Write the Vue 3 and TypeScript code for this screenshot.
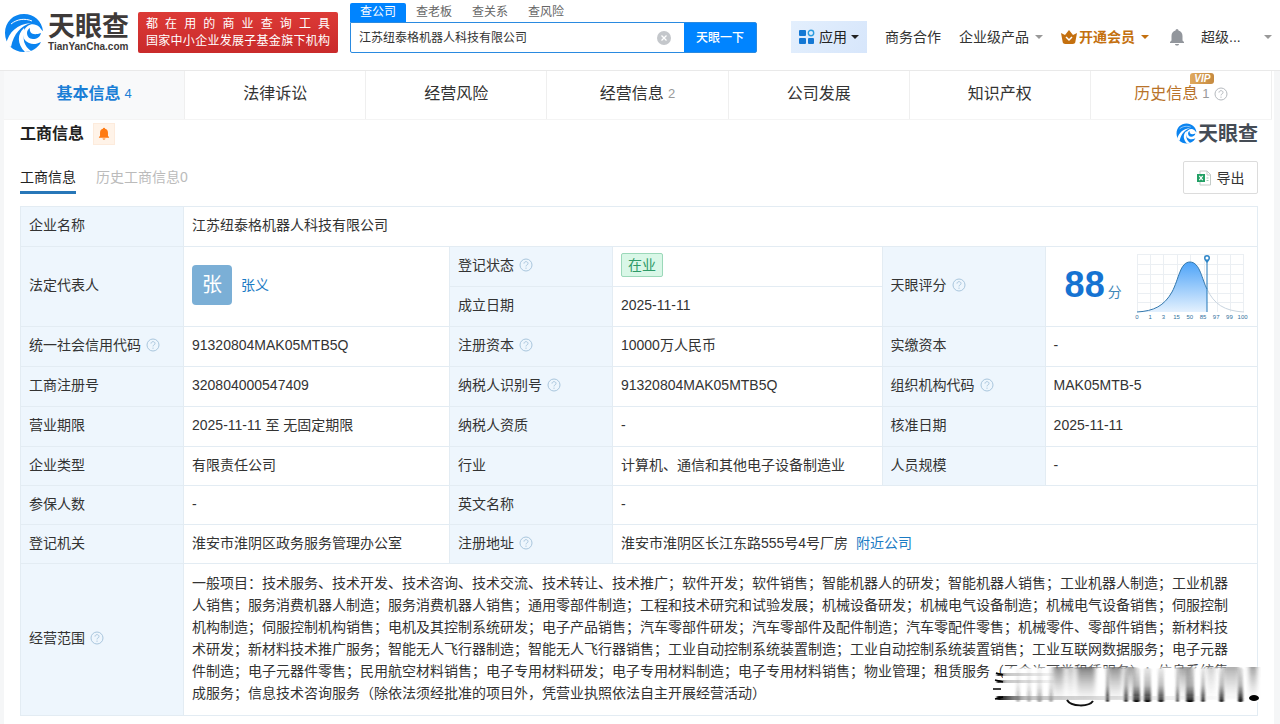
<script setup lang="ts">
import { ref } from 'vue'

interface NavItem {
  label: string
  count?: number
  vip?: boolean
}

const searchTabs: string[] = ['查公司', '查老板', '查关系', '查风险']
const activeSearch = ref(0)
const keyword = ref('江苏纽泰格机器人科技有限公司')

const navItems: NavItem[] = [
  { label: '基本信息', count: 4 },
  { label: '法律诉讼' },
  { label: '经营风险' },
  { label: '经营信息', count: 2 },
  { label: '公司发展' },
  { label: '知识产权' },
  { label: '历史信息', count: 1, vip: true },
]
const activeNav = ref(0)

const scoreTicks: string[] = ['0', '1', '3', '15', '50', '85', '97', '99', '100']

const scope =
  '一般项目：技术服务、技术开发、技术咨询、技术交流、技术转让、技术推广；软件开发；软件销售；智能机器人的研发；智能机器人销售；工业机器人制造；工业机器人销售；服务消费机器人制造；服务消费机器人销售；通用零部件制造；工程和技术研究和试验发展；机械设备研发；机械电气设备制造；机械电气设备销售；伺服控制机构制造；伺服控制机构销售；电机及其控制系统研发；电子产品销售；汽车零部件研发；汽车零部件及配件制造；汽车零配件零售；机械零件、零部件销售；新材料技术研发；新材料技术推广服务；智能无人飞行器制造；智能无人飞行器销售；工业自动控制系统装置制造；工业自动控制系统装置销售；工业互联网数据服务；电子元器件制造；电子元器件零售；民用航空材料销售；电子专用材料研发；电子专用材料制造；电子专用材料销售；物业管理；租赁服务（不含许可类租赁服务）；信息系统集成服务；信息技术咨询服务（除依法须经批准的项目外，凭营业执照依法自主开展经营活动）'

interface Streak {
  x: number
  w: number
  o: number
}
const streaks: Streak[] = [
  { x: 25, w: 4, o: 0.3 },
  { x: 36, w: 4, o: 0.3 },
  { x: 46, w: 5, o: 0.35 },
  { x: 58, w: 4, o: 0.35 },
  { x: 115, w: 3, o: 1 },
  { x: 133, w: 4, o: 0.9 },
  { x: 142, w: 7, o: 1 },
  { x: 153, w: 7, o: 1 },
  { x: 167, w: 6, o: 0.9 },
  { x: 185, w: 3, o: 0.8 },
  { x: 195, w: 8, o: 1 },
  { x: 210, w: 4, o: 0.9 },
  { x: 228, w: 5, o: 0.9 },
  { x: 247, w: 5, o: 1 },
]
const smudges: Streak[] = [
  { x: 62, w: 11, o: 0.7 },
  { x: 76, w: 7, o: 0.4 },
  { x: 86, w: 18, o: 0.8 },
  { x: 117, w: 14, o: 0.7 },
  { x: 135, w: 9, o: 0.6 },
  { x: 187, w: 14, o: 0.6 },
  { x: 216, w: 8, o: 0.3 },
  { x: 232, w: 16, o: 0.5 },
  { x: 258, w: 8, o: 0.6 },
]
</script>

<template>
  <svg class="defs" width="0" height="0" aria-hidden="true">
    <symbol id="swirl" viewBox="0 0 40 40">
      <path d="M20 1C9 1 1 9 1 20s8 19 19 19c8 0 14-4 17-10-4 2-8 3-12 1-5-2-7-7-5-12 2-6 8-8 12-6 4 1 5 5 7 6C38 8 30 1 20 1z" fill="#0b84f0" />
      <path d="M37 20c-1 4-4 6-8 6-4 0-6-3-6-6 0-2 1-4 3-5-1 5 3 8 11 5z" fill="#0b84f0" />
      <path d="M2 31C5 19 13 11 27 10 17 13 10 20 7 34z" fill="#fff" />
      <path d="M20 15c-7 6-7 16 1 24l6-1c-7-5-9-12-6-20z" fill="#fff" />
      <path d="M7 11c6-5 14-6 21-3" fill="none" stroke="#fff" stroke-width="1" />
    </symbol>
    <symbol id="help" viewBox="0 0 14 14">
      <circle cx="7" cy="7" r="6" fill="none" stroke="currentColor" />
      <path d="M5 5.600C5 3 9 3 9 5.500 9 7 7 6.800 7 8.400M7 9.600v1.200" fill="none" stroke="currentColor" />
    </symbol>
    <symbol id="bell" viewBox="0 0 16 18">
      <path d="M8 1a1.500 1.500 0 0 1 1.500 1.500C12 3.200 13.500 5 13.500 8v4.500L15 14v1H1v-1l1.500-1.500V8c0-3 1.500-4.800 4-5.500A1.500 1.500 0 0 1 8 1zM6 16h4c0 2-4 2-4 0z" fill="currentColor" />
    </symbol>
  </svg>

  <header class="top">
    <a class="brand" href="#" aria-label="天眼查">
      <svg class="brand-mark"><use href="#swirl" /></svg>
      <span class="brand-text">
        <span class="brand-name">天眼查</span>
        <span class="brand-domain">TianYanCha.com</span>
      </span>
    </a>
    <div class="slogan">
      <span>都在用的商业查询工具</span>
      <span>国家中小企业发展子基金旗下机构</span>
    </div>
    <form class="search" @submit.prevent>
      <div class="search-tabs">
        <button
          v-for="(tab, i) in searchTabs"
          :key="tab"
          type="button"
          :class="{ active: i === activeSearch }"
          @click="activeSearch = i"
        >{{ tab }}</button>
      </div>
      <div class="search-row">
        <input v-model="keyword" type="text" aria-label="搜索" />
        <button class="clear" type="button" aria-label="清空" @click="keyword = ''">
          <svg viewBox="0 0 14 14" width="14" height="14">
            <circle cx="7" cy="7" r="7" fill="#c4c7cb" />
            <path d="M4.500 4.500l5 5M9.500 4.500l-5 5" stroke="#fff" stroke-width="1.300" />
          </svg>
        </button>
        <button class="submit" type="submit">天眼一下</button>
      </div>
    </form>
    <nav class="tools">
      <button class="apps" type="button">
        <svg viewBox="0 0 16 16" width="16" height="16">
          <rect x="0" y="1" width="7" height="6" rx="1" fill="#1478d4" />
          <circle cx="12" cy="4" r="2.700" fill="none" stroke="#2b9de0" stroke-width="1.400" />
          <rect x="0" y="9" width="7" height="6" rx="1" fill="#1478d4" />
          <rect x="9" y="9" width="6" height="6" rx="1" fill="#1478d4" />
        </svg>
        <span>应用</span><i class="caret"></i>
      </button>
      <a class="coop" href="#">商务合作</a>
      <button class="plain" type="button"><span>企业级产品</span><i class="caret light"></i></button>
      <button class="plain member" type="button">
        <svg viewBox="0 0 16 14" width="16" height="14">
          <path d="M0 3l4 2 4-5 4 5 4-2-1.500 8c0 2-1 3-3 3h-7c-2 0-3-1-3-3z" fill="#c4700f" />
          <path d="M5 7l3 3 3-3" fill="none" stroke="#fff" stroke-width="1.500" />
        </svg>
        <span>开通会员</span><i class="caret"></i>
      </button>
      <button class="notice" type="button" aria-label="消息">
        <svg width="16" height="18"><use href="#bell" /></svg>
      </button>
      <button class="plain user" type="button"><span>超级...</span><i class="caret light"></i></button>
    </nav>
  </header>

  <main class="page">
    <nav class="main-nav">
      <a
        v-for="(item, i) in navItems"
        :key="item.label"
        href="#"
        :class="{ active: i === activeNav, vip: item.vip }"
        @click.prevent="activeNav = i"
      >
        <span class="nav-label">{{ item.label }}<b v-if="item.vip" class="vip-badge">VIP</b></span>
        <span v-if="item.count" class="count">{{ item.count }}</span>
        <svg v-if="item.vip" class="help grey"><use href="#help" /></svg>
      </a>
    </nav>

    <section class="content">
      <div class="title-row">
        <h2>工商信息</h2>
        <button class="alert" type="button" aria-label="监控">
          <svg width="12" height="13"><use href="#bell" /></svg>
        </button>
        <div class="stamp">
          <svg width="21" height="21"><use href="#swirl" /></svg><span>天眼查</span>
        </div>
      </div>

      <div class="sub-row">
        <div class="sub-tabs">
          <button class="active" type="button">工商信息</button>
          <button type="button">历史工商信息0</button>
        </div>
        <button class="export" type="button">
          <svg viewBox="0 0 14 16" width="14" height="16">
            <path d="M3 1h7l3.500 3.500V15H3z" fill="#fff" stroke="#c3cbc8" />
            <path d="M10 1v4h3.500" fill="none" stroke="#c3cbc8" />
            <path d="M9.500 8h2M9.500 10.500h2" stroke="#9bcbb2" />
            <rect x="0" y="4" width="8" height="8" fill="#22a065" />
            <path d="M2.300 5.800l3.400 4.400M5.700 5.800l-3.400 4.400" stroke="#fff" stroke-width="1.200" />
          </svg>
          <span>导出</span>
        </button>
      </div>

      <div class="table-wrap">
        <table>
          <colgroup>
            <col class="c-label" /><col class="c-first" />
            <col class="c-label" /><col class="c-second" />
            <col class="c-label" /><col />
          </colgroup>
          <tbody>
            <tr>
              <th scope="row">企业名称</th>
              <td colspan="5">江苏纽泰格机器人科技有限公司</td>
            </tr>
            <tr>
              <th scope="row" rowspan="2">法定代表人</th>
              <td rowspan="2">
                <div class="person"><span class="avatar">张</span><a href="#">张义</a></div>
              </td>
              <th scope="row">登记状态<svg class="help"><use href="#help" /></svg></th>
              <td><span class="status">在业</span></td>
              <th scope="row" rowspan="2">天眼评分<svg class="help"><use href="#help" /></svg></th>
              <td class="score-cell" rowspan="2">
                <div class="score">
                  <strong>88</strong><span class="unit">分</span>
                  <svg class="chart" viewBox="0 0 116 70" width="116" height="70">
                    <defs>
                      <linearGradient id="area" x1="0" y1="0" x2="0" y2="1">
                        <stop offset="0" stop-color="#4da3f8" />
                        <stop offset="1" stop-color="#e4f1fe" />
                      </linearGradient>
                    </defs>
                    <path d="M5 4.500h107M5 14.500h107M5 24.500h107M5 33.500h107M5 43.500h107M5 52.500h107M5.500 4v58M18.500 4v58M31.500 4v58M45.500 4v58M58.500 4v58M72.500 4v58M85.500 4v58M98.500 4v58M111.500 4v58" stroke="#ebeff3" />
                    <path d="M5 62C22 61 32 56 40 42C47 29 48 12 58 12C68 12 70 30 75 39V62z" fill="url(#area)" />
                    <path d="M75 39C82 54 92 61 112 62" fill="none" stroke="#c8d4df" />
                    <path d="M5 62C22 61 32 56 40 42C47 29 48 12 58 12C68 12 70 30 75 39" fill="none" stroke="#3478ad" />
                    <path d="M75 10v52" stroke="#2176b8" />
                    <path d="M72 8a3 3 0 1 1 6 0c0 2-3 5-3 5s-3-3-3-5z" fill="#2e86c8" />
                    <circle cx="75" cy="8" r="1.500" fill="#fff" />
                    <text v-for="(t, i) in scoreTicks" :key="t" :x="5 + i * 13.200" y="69" class="tick">{{ t }}</text>
                  </svg>
                </div>
              </td>
            </tr>
            <tr>
              <th scope="row">成立日期</th>
              <td>2025-11-11</td>
            </tr>
            <tr>
              <th scope="row">统一社会信用代码<svg class="help"><use href="#help" /></svg></th>
              <td>91320804MAK05MTB5Q</td>
              <th scope="row">注册资本<svg class="help"><use href="#help" /></svg></th>
              <td>10000万人民币</td>
              <th scope="row">实缴资本</th>
              <td>-</td>
            </tr>
            <tr>
              <th scope="row">工商注册号</th>
              <td>320804000547409</td>
              <th scope="row">纳税人识别号<svg class="help"><use href="#help" /></svg></th>
              <td>91320804MAK05MTB5Q</td>
              <th scope="row">组织机构代码<svg class="help"><use href="#help" /></svg></th>
              <td>MAK05MTB-5</td>
            </tr>
            <tr>
              <th scope="row">营业期限</th>
              <td>2025-11-11 至 无固定期限</td>
              <th scope="row">纳税人资质</th>
              <td>-</td>
              <th scope="row">核准日期</th>
              <td>2025-11-11</td>
            </tr>
          </tbody>
          <tbody class="tight">
            <tr>
              <th scope="row">企业类型</th>
              <td>有限责任公司</td>
              <th scope="row">行业</th>
              <td>计算机、通信和其他电子设备制造业</td>
              <th scope="row">人员规模</th>
              <td>-</td>
            </tr>
            <tr>
              <th scope="row">参保人数</th>
              <td>-</td>
              <th scope="row">英文名称</th>
              <td colspan="3">-</td>
            </tr>
            <tr>
              <th scope="row">登记机关</th>
              <td>淮安市淮阴区政务服务管理办公室</td>
              <th scope="row">注册地址<svg class="help"><use href="#help" /></svg></th>
              <td colspan="3">淮安市淮阴区长江东路555号4号厂房<a class="nearby" href="#">附近公司</a></td>
            </tr>
            <tr>
              <th scope="row">经营范围<svg class="help"><use href="#help" /></svg></th>
              <td class="scope" colspan="5">{{ scope }}</td>
            </tr>
          </tbody>
        </table>

        <svg class="smear" viewBox="0 0 270 44" width="270" height="44" aria-hidden="true">
          <defs>
            <linearGradient id="veil" x1="0" y1="0" x2="0" y2="1">
              <stop offset="0" stop-color="#fff" stop-opacity="0" />
              <stop offset=".12" stop-color="#fff" />
              <stop offset="1" stop-color="#fff" />
            </linearGradient>
            <linearGradient id="streak" x1="0" y1="0" x2="0" y2="1">
              <stop offset="0" stop-color="#666" stop-opacity=".15" />
              <stop offset=".5" stop-color="#555" stop-opacity=".4" />
              <stop offset=".8" stop-color="#222" stop-opacity=".75" />
              <stop offset="1" stop-color="#000" />
            </linearGradient>
            <linearGradient id="smudge" x1="0" y1="0" x2="0" y2="1">
              <stop offset="0" stop-color="#333" stop-opacity=".8" />
              <stop offset=".5" stop-color="#777" stop-opacity=".5" />
              <stop offset="1" stop-color="#aaa" stop-opacity=".1" />
            </linearGradient>
            <linearGradient id="side" x1="0" y1="0" x2="1" y2="0">
              <stop offset="0" stop-color="#000" />
              <stop offset=".12" stop-color="#888" stop-opacity=".5" />
              <stop offset="1" stop-color="#bbb" stop-opacity="0" />
            </linearGradient>
            <filter id="soft" filterUnits="userSpaceOnUse" x="0" y="0" width="270" height="44">
              <feGaussianBlur stdDeviation="2 0.600" />
            </filter>
            <filter id="slight" filterUnits="userSpaceOnUse" x="0" y="0" width="270" height="44">
              <feGaussianBlur stdDeviation="0.900 0.500" />
            </filter>
          </defs>
          <rect x="12" y="1" width="256" height="37" fill="url(#veil)" />
          <g filter="url(#soft)">
            <rect v-for="s in smudges" :key="s.x" :x="s.x" y="3" :width="s.w" height="32" fill="url(#smudge)" :opacity="s.o" />
          </g>
          <g filter="url(#slight)">
            <rect v-for="s in streaks" :key="s.x" :x="s.x" y="4" :width="s.w" height="34" rx="2" fill="url(#streak)" :opacity="s.o" />
            <rect x="6" y="9" width="75" height="3" fill="url(#side)" />
            <rect x="6" y="16" width="75" height="3" fill="url(#side)" />
            <rect x="6" y="32" width="250" height="4" fill="url(#side)" />
          </g>
          <path d="M5 9l7 2M4 16l8 2M2 25h8M4 35l8-2" stroke="#000" stroke-width="1.600" />
          <path d="M76 36c4 7 22 7 26 1" fill="none" stroke="#111" stroke-width="2" />
          <ellipse cx="263" cy="34" rx="5" ry="3" fill="#000" />
        </svg>
      </div>
    </section>
  </main>
</template>

<style>
body {
  margin: 0;
  background: #f5f6f7;
}
</style>

<style scoped>
.defs {
  position: absolute;
}

.top,
.page {
  font-family: "Liberation Sans", "Noto Sans CJK SC", sans-serif;
  font-size: 14px;
  line-height: 20px;
  color: #333;
}

button,
input {
  font: inherit;
  color: inherit;
  border: 0;
  padding: 0;
  margin: 0;
  background: none;
  white-space: nowrap;
}

a {
  text-decoration: none;
  color: inherit;
}

.top {
  display: flex;
  align-items: flex-start;
  height: 71px;
  background: #fff;
  border-bottom: 1px solid #e9e9e9;
  box-sizing: border-box;
  padding-left: 4px;
}

.brand {
  display: flex;
  gap: 4px;
  width: 126px;
  margin-top: 13px;
  flex: none;
}

.brand-mark {
  width: 40px;
  height: 40px;
}

.brand-text {
  display: flex;
  flex-direction: column;
  padding-top: 1px;
}

.brand-name {
  font-size: 27px;
  line-height: 27px;
  font-weight: 700;
  color: #3e3a39;
}

.brand-domain {
  font-size: 10px;
  line-height: 12px;
  font-weight: 700;
  color: #3e3a39;
}

.slogan {
  display: flex;
  flex-direction: column;
  justify-content: center;
  flex: none;
  width: 200px;
  height: 41px;
  margin: 12px 12px 0 8px;
  padding: 0 8px;
  box-sizing: border-box;
  border-radius: 2px;
  background: linear-gradient(#dc3a36, #c92a2b);
  color: #fff;
  font-size: 12px;
  line-height: 17px;
}

.slogan span {
  text-align: justify;
  text-align-last: justify;
}

.search {
  flex: 0 1 407px;
  margin-top: 3px;
  font-size: 12px;
}

.search-tabs {
  display: flex;
}

.search-tabs button {
  width: 56px;
  height: 19px;
  line-height: 19px;
  color: #666;
}

.search-tabs .active {
  background: #0084ff;
  color: #fff;
  border-radius: 2px 2px 0 0;
}

.search-row {
  display: flex;
  align-items: center;
  height: 31px;
  border: 1px solid #2a8ae0;
  border-radius: 0 2px 2px 2px;
  box-sizing: border-box;
}

.search-row input {
  flex: 1;
  min-width: 0;
  padding-left: 8px;
  outline: none;
}

.clear {
  display: flex;
  margin: 0 13px 0 8px;
}

.submit {
  width: 72px;
  align-self: stretch;
  background: #0084ff;
  color: #fff;
  font-weight: 500;
}

.tools {
  display: flex;
  flex: 1;
  align-items: center;
  height: 32px;
  margin: 21px 8px 0 34px;
}

.apps {
  display: flex;
  align-items: center;
  gap: 4px;
  height: 32px;
  padding: 0 8px;
  background: linear-gradient(120deg, #e3effd, #d7e6fb);
  color: #222;
}

.caret {
  border: 4px solid transparent;
  border-top-color: currentColor;
  border-bottom: 0;
  margin-left: 4px;
}

.apps .caret {
  margin-left: 0;
}

.caret.light {
  color: #999;
}

.coop {
  margin-left: 18px;
  white-space: nowrap;
}

.plain {
  display: flex;
  align-items: center;
  gap: 2px;
  margin-left: 18px;
}

.member {
  color: #c4700f;
  font-weight: 700;
}

.notice {
  display: flex;
  margin-left: 20px;
  color: #92969c;
}

.user {
  flex: 1;
  justify-content: space-between;
  margin-left: 16px;
}

.page {
  min-height: calc(100vh - 71px);
  margin: 0 6px 0 4px;
  background: #fff;
}

.main-nav {
  display: flex;
  height: 49px;
  margin-right: 2px;
  border-bottom: 1px solid #f4f4f4;
  box-sizing: border-box;
}

.main-nav a {
  display: flex;
  flex: 1 1 0;
  align-items: center;
  justify-content: center;
  gap: 4px;
  padding-bottom: 3px;
  border-right: 1px solid #efefef;
  font-size: 16px;
}

.main-nav .active {
  background: #f8f9fa;
  color: #1b7fd6;
}

.active .nav-label {
  font-weight: 700;
}

.nav-label {
  position: relative;
}

.count {
  font-size: 13px;
  color: #999;
}

.active .count {
  color: #1b7fd6;
}

.main-nav .vip {
  color: #b8732a;
}

.vip-badge {
  position: absolute;
  right: -16px;
  top: -11px;
  width: 24px;
  height: 11px;
  border-radius: 3px 3px 3px 0;
  background: linear-gradient(90deg, #e0a95e, #c58a40);
  color: #fff;
  font-size: 10px;
  line-height: 11px;
  font-style: italic;
  text-align: center;
}

.help {
  width: 14px;
  height: 14px;
  margin-left: 5px;
  vertical-align: -2px;
  color: #a9c6dd;
}

.help.grey {
  margin-left: 0;
  color: #b5b9be;
}

.content {
  padding: 0 16px 9px;
}

.title-row {
  display: flex;
  align-items: center;
  height: 27px;
}

h2 {
  margin: 0 9px 0 0;
  font-size: 16px;
  line-height: 24px;
  color: #222;
}

.alert {
  display: flex;
  align-items: center;
  justify-content: center;
  width: 22px;
  height: 22px;
  background: #fff3e8;
  border: 1px solid #fdebdc;
  box-sizing: border-box;
  color: #ff7a12;
}

.stamp {
  display: flex;
  align-items: center;
  gap: 1px;
  margin-left: auto;
  font-size: 20px;
  line-height: 24px;
  font-weight: 700;
  color: #454c55;
}

.sub-row {
  display: flex;
  justify-content: space-between;
  align-items: flex-end;
  height: 47px;
  margin-bottom: 12px;
}

.sub-tabs {
  display: flex;
  gap: 20px;
}

.sub-tabs button {
  height: 28px;
  padding-bottom: 4px;
  border-bottom: 3px solid transparent;
  box-sizing: border-box;
  color: #bbb;
}

.sub-tabs .active {
  border-color: #2777b8;
  color: #222;
}

.export {
  display: flex;
  align-items: center;
  justify-content: center;
  gap: 6px;
  width: 75px;
  height: 33px;
  border: 1px solid #dcdcdc;
  border-radius: 2px;
  box-sizing: border-box;
}

.table-wrap {
  position: relative;
}

table {
  width: 100%;
  table-layout: fixed;
  border-collapse: collapse;
}

.c-label {
  width: 163px;
}

.c-first {
  width: 21.500%;
}

.c-second {
  width: 21.800%;
}

th,
td {
  height: 40px;
  padding: 0 8px 3px;
  border: 1px solid #e3ecf3;
  box-sizing: border-box;
  text-align: left;
  font-weight: 400;
  white-space: nowrap;
}

.tight th,
.tight td {
  height: 39px;
}

th {
  background: #eef6fd;
}

.person {
  display: flex;
  align-items: center;
  gap: 9px;
}

.person a,
.nearby {
  color: #1b7bc4;
}

.nearby {
  margin-left: 8px;
}

.avatar {
  width: 40px;
  height: 40px;
  border-radius: 4px;
  background: #7bafd6;
  color: #fff;
  font-size: 20px;
  line-height: 40px;
  text-align: center;
}

.status {
  display: inline-block;
  padding: 0 6px;
  border: 1px solid #9bd8b9;
  border-radius: 2px;
  background: #d9f7e7;
  color: #2f9a67;
  line-height: 22px;
}

.score-cell {
  padding: 0 0 3px 19px;
}

.score {
  display: flex;
  align-items: center;
}

.score strong {
  font-size: 36px;
  line-height: 40px;
  color: #1673d2;
}

.unit {
  margin: 14px 10px 0 3px;
  color: #3f88b8;
}

.chart {
  flex: none;
}

.tick {
  font-size: 6px;
  fill: #33719d;
  text-anchor: middle;
}

.tight .scope {
  height: 152px;
  padding-right: 16px;
  line-height: 22px;
  white-space: normal;
  text-spacing-trim: space-all;
}

.smear {
  position: absolute;
  right: -3px;
  bottom: 8px;
}
</style>
